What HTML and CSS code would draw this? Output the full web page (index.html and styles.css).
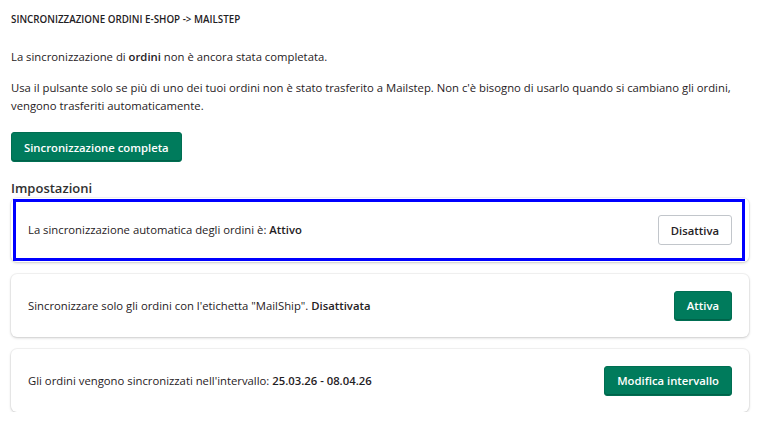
FILE: index.html
```html
<!DOCTYPE html>
<html lang="it">
<head>
<meta charset="utf-8">
<title>Sincronizzazione ordini</title>
<link rel="stylesheet" href="styles.css">
</head>
<body>
<main class="page">
  <h1 class="title">SINCRONIZZAZIONE ORDINI E-SHOP -&gt; MAILSTEP</h1>
  <p class="text first">La sincronizzazione di <b>ordini</b> non è ancora stata completata.</p>
  <p class="text">Usa il pulsante solo se più di uno dei tuoi ordini non è stato trasferito a Mailstep. Non c'è bisogno di usarlo quando si cambiano gli ordini, vengono trasferiti automaticamente.</p>
  <button class="btn btn-primary sync">Sincronizzazione completa</button>
  <h2 class="section">Impostazioni</h2>
  <div class="cards">
    <div class="card highlighted">
      <span class="card-text">La sincronizzazione automatica degli ordini è: <b>Attivo</b></span>
      <button class="btn btn-secondary">Disattiva</button>
    </div>
    <div class="card">
      <span class="card-text">Sincronizzare solo gli ordini con l'etichetta "MailShip". <b>Disattivata</b></span>
      <button class="btn btn-primary">Attiva</button>
    </div>
    <div class="card">
      <span class="card-text">Gli ordini vengono sincronizzati nell'intervallo: <b>25.03.26 - 08.04.26</b></span>
      <button class="btn btn-primary">Modifica intervallo</button>
    </div>
  </div>
</main>
</body>
</html>
```
FILE: styles.css
```css
* { box-sizing: border-box; }
body {
  margin: 0;
  background: #ffffff;
  font-family: "Open Sans", "Noto Sans", sans-serif;
  color: #1f2124;
}
.page {
  padding: 13px 9px 0 11px;
  display: flex;
  flex-direction: column;
  align-items: flex-start;
}
.title {
  margin: 0;
  font-size: 9.8px;
  font-weight: 600;
  line-height: 14px;
  color: #1f2124;
}
.text {
  margin: 0;
  font-size: 11.3px;
  line-height: 18px;
  color: #1f2124;
}
.text.first { margin-top: 21px; margin-bottom: 13px; }
.text b { font-weight: 600; }
.btn {
  font-family: inherit;
  font-size: 11.3px;
  font-weight: 600;
  border-radius: 3px;
  cursor: pointer;
  height: 30px;
  padding: 0 12px;
  white-space: nowrap;
}
.btn-primary {
  background: #007b5c;
  color: #ffffff;
  border: 1px solid #006e52;
  box-shadow: inset 0 -1px 0 rgba(0,0,0,0.2);
}
.btn-secondary {
  background: #ffffff;
  color: #1f2124;
  border: 1px solid #c2c6cb;
}
.sync { margin-top: 17px; }
.section {
  margin: 17px 0 0 0;
  font-size: 13px;
  font-weight: 600;
  line-height: 18px;
  color: #303030;
}
.cards {
  align-self: stretch;
  margin-top: 1px;
  display: flex;
  flex-direction: column;
  gap: 12px;
}
.card {
  position: relative;
  background: #ffffff;
  border-radius: 6px;
  box-shadow: 0 0 0 1px rgba(0,0,0,0.04), 0 1px 3px rgba(0,0,0,0.18);
  height: 63px;
  padding: 0 17px 0 17px;
  display: flex;
  align-items: center;
  justify-content: space-between;
}
.card.highlighted { height: 64px; }
.card.highlighted::after {
  content: "";
  position: absolute;
  top: 1px;
  left: 2px;
  right: 4px;
  bottom: 1px;
  border: 3px solid #0000ff;
  pointer-events: none;
}
.card-text {
  font-size: 11.3px;
  line-height: 18px;
  color: #1f2124;
}
.card-text b { font-weight: 600; }
```
